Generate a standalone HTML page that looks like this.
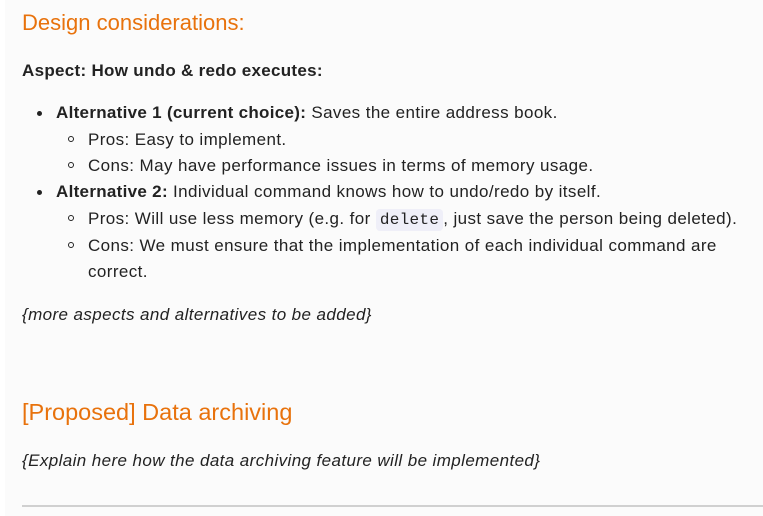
<!DOCTYPE html>
<html><head><meta charset="utf-8"><style>
html,body{margin:0;padding:0;width:763px;height:516px;overflow:hidden;background:#fff}
.bg{position:absolute;left:5px;top:0;width:758px;height:516px;background:#fbfbfb}
.t{position:absolute;white-space:nowrap;font-family:"Liberation Sans",sans-serif;font-size:17px;letter-spacing:0.4px;color:#222;line-height:20px}
.h{color:#e8720c;font-size:22px;letter-spacing:0;line-height:26px}
b{font-weight:bold;letter-spacing:0.3px}
.dot{position:absolute;width:5px;height:5px;border-radius:50%;background:#222}
.circ{position:absolute;width:6px;height:6px;border-radius:50%;border:1px solid #222;box-sizing:border-box}
code{font-family:"Liberation Mono",monospace;background:#efeff8;border-radius:4px;padding:2px 4px;font-size:16px;letter-spacing:0.3px}
</style></head><body>
<div class="bg"></div>
<div class="t h" style="left:22px;top:10px">Design considerations:</div>
<div class="t" style="left:22px;top:61px"><b>Aspect: How undo &amp; redo executes:</b></div>
<div class="dot" style="left:37px;top:111px"></div>
<div class="t" style="left:56px;top:103px"><b>Alternative 1 (current choice):</b> Saves the entire address book.</div>
<div class="circ" style="left:68px;top:136px"></div>
<div class="t" style="left:88px;top:130px">Pros: Easy to implement.</div>
<div class="circ" style="left:68px;top:162px"></div>
<div class="t" style="left:88px;top:156px">Cons: May have performance issues in terms of memory usage.</div>
<div class="dot" style="left:37px;top:190px"></div>
<div class="t" style="left:56px;top:182px"><b>Alternative 2:</b> Individual command knows how to undo/redo by itself.</div>
<div class="circ" style="left:68px;top:215px"></div>
<div class="t" style="left:88px;top:209px">Pros: Will use less memory (e.g. for <code>delete</code>, just save the person being deleted).</div>
<div class="circ" style="left:68px;top:242px"></div>
<div class="t" style="left:88px;top:236px">Cons: We must ensure that the implementation of each individual command are</div>
<div class="t" style="left:88px;top:262px">correct.</div>
<div class="t" style="left:22px;top:305px;font-style:italic">{more aspects and alternatives to be added}</div>
<div class="t h" style="left:22px;top:399px;font-size:23.5px">[Proposed] Data archiving</div>
<div class="t" style="left:22px;top:451px;font-style:italic">{Explain here how the data archiving feature will be implemented}</div>
<div style="position:absolute;left:22px;top:505px;width:741px;height:2px;background:#d0d0d0"></div>
</body></html>
